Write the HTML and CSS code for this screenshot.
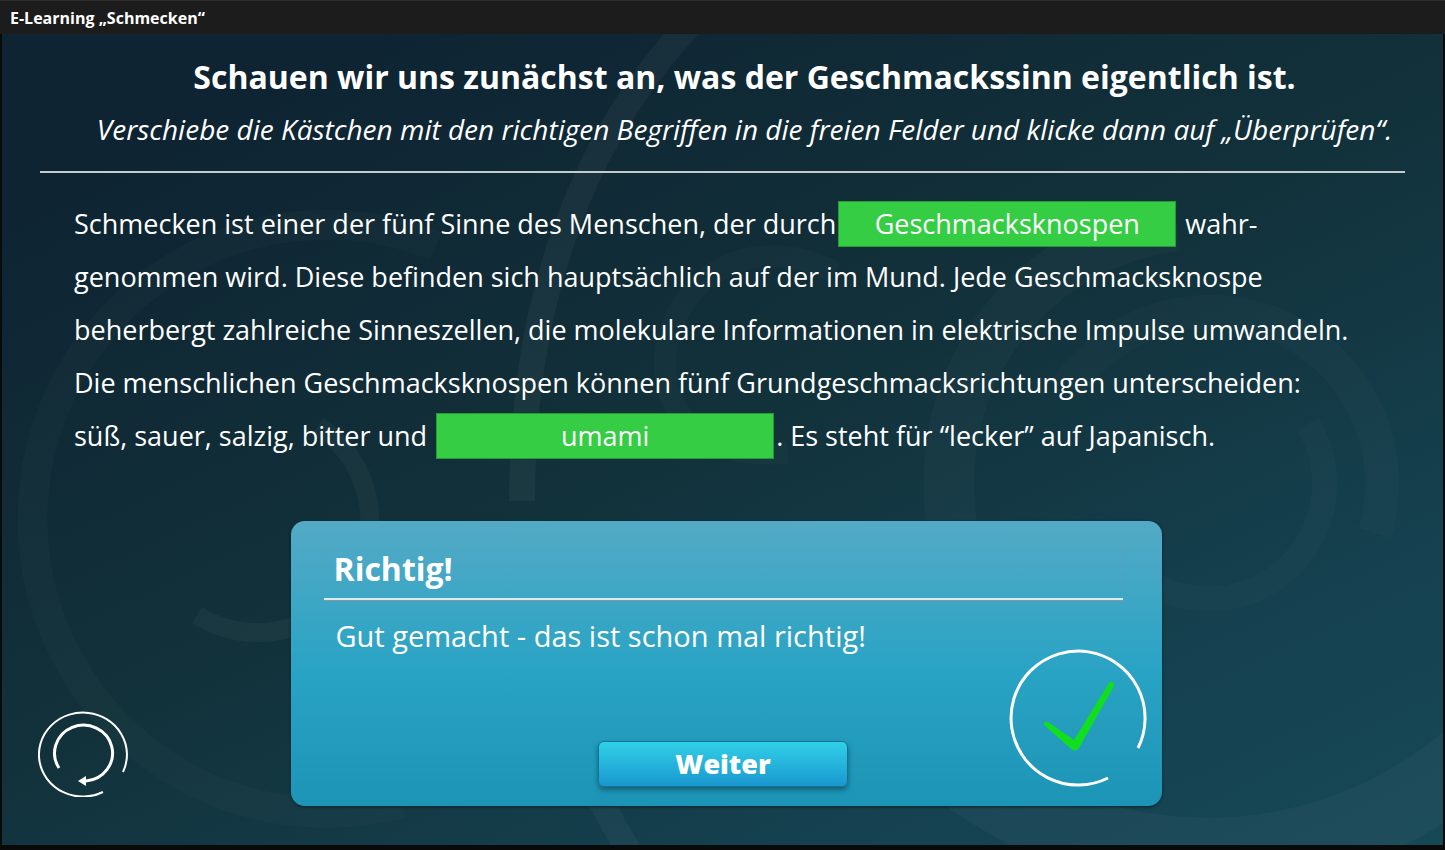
FILE: index.html
```html
<!DOCTYPE html>
<html lang="de">
  <head>
    <meta charset="utf-8">
    <title>E-Learning „Schmecken“</title>
    <link rel="stylesheet" href="styles.css">
  </head>
  <body>
    <div id="titlebar">E-Learning „Schmecken“</div>
    <main id="stage">
      <svg id="swirls" viewBox="0 0 1441 811" preserveAspectRatio="xMidYMid slice" aria-hidden="true">
        <g transform="translate(-2 -34)" fill="none" stroke="#fff">
          <path stroke-width="30" stroke-opacity=".018" d="M436 246A294 294 0 1 0 402 803" />
          <path stroke-width="19" stroke-opacity=".035" d="M318 426A112 112 0 0 1 197 615" />
          <path stroke-width="26" stroke-opacity=".04" d="M522 501C522 330 565 160 688 26" />
          <path stroke-width="25" stroke-opacity=".035" d="M585 770Q605 812 632 856" />
          <path stroke-width="22" stroke-opacity=".02" d="M835 272C740 225 665 290 665 365C665 420 710 460 788 453" />
          <path stroke-width="51" stroke-opacity=".025" d="M1177 226A256 256 0 0 0 949 480Q949 560 975 610" />
          <path stroke-width="74" stroke-opacity=".03" d="M890 700A403 403 0 0 0 1500 729" />
          <path stroke-width="34" stroke-opacity=".02" d="M1068 387A172 172 0 0 1 1375 533" />
          <path stroke-width="25" stroke-opacity=".018" d="M1308 424A115 115 0 1 1 1110 543" />
        </g>
      </svg>

      <header>
        <h1>Schauen wir uns zunächst an, was der Geschmackssinn eigentlich ist.</h1>
        <p>Verschiebe die Kästchen mit den richtigen Begriffen in die freien Felder und klicke dann auf „Überprüfen“.</p>
      </header>

      <p id="cloze">
        Schmecken ist einer der fünf Sinne des Menschen, der durch<button class="term" type="button" draggable="true">Geschmacksknospen</button>
        wahr-<br>
        genommen wird. Diese befinden sich hauptsächlich auf der im Mund. Jede Geschmacksknospe<br>
        beherbergt zahlreiche Sinneszellen, die molekulare Informationen in elektrische Impulse umwandeln.<br>
        Die menschlichen Geschmacksknospen können fünf Grundgeschmacksrichtungen unterscheiden:<br>
        süß, sauer, salzig, bitter und
        <button class="term" type="button" draggable="true">umami</button>. Es steht für “lecker” auf Japanisch.
      </p>

      <div id="bottom">
        <button id="reset" type="button" aria-label="Zurücksetzen">
          <svg width="92" height="88" viewBox="0 0 92 88" fill="none" stroke="#fff">
            <path stroke-width="2" d="M85 63A44 42 0 1 0 65 83" />
            <path stroke-width="3" d="M21 59A29 28 0 1 1 48 72" />
            <path fill="#fff" stroke="none" d="M40 72L48 67V77Z" />
          </svg>
        </button>
        <section id="feedback">
          <h2>Richtig!</h2>
          <p>Gut gemacht - das ist schon mal richtig!</p>
          <button id="next" type="button">Weiter</button>
          <svg id="check" width="138" height="138" viewBox="0 0 138 138" aria-hidden="true">
            <path fill="none" stroke="#fff" stroke-width="3" d="M129 99A67 67 0 1 0 99 129" />
            <path fill="#12de20" d="M39 73L65 91L100 34Q103 31 105 34L105 37L70 99Q66 104 61 99L35 76Q34 72 39 73Z" />
          </svg>
        </section>
      </div>
    </main>
  </body>
</html>
```
FILE: styles.css
```css
* { box-sizing: border-box; padding: 0; margin: 0; }

body {
  min-height: 100vh;
  display: flex;
  flex-direction: column;
  background: #0a0a0a;
  color: white;
  font-family: "Open Sans", "Noto Sans", sans-serif;
}

button {
  border: 0;
  background: none;
  color: inherit;
  font: inherit;
  cursor: pointer;
}

#titlebar {
  height: 34px;
  padding: 0 10px;
  border-top: 1px solid #2d2d2d;
  background: #1c1c1c;
  font-size: 16px;
  font-weight: bold;
  line-height: 34px;
}

#stage {
  position: relative;
  flex: 1;
  display: flex;
  flex-direction: column;
  margin: 0 2px 5px;
  overflow: hidden;
  background: linear-gradient(155deg, #0e2432 12%, #12323b 50%, #154150 80%, #174856 100%);
}

/* faint arcs behind everything */
#swirls {
  position: absolute;
  width: 100%;
  height: 100%;
}

header, #cloze, #bottom { position: relative; }

header {
  margin: 0 38px;
  padding: 19px 0 14px 44px;
  border-bottom: 2px solid #c4cbce;
  text-align: center;
  white-space: nowrap;
}

header h1 {
  font-size: 32px;
  line-height: 48px;
}

header p {
  margin: 0 -20px;
  font-size: 28px;
  font-style: italic;
  line-height: 56px;
}

#cloze {
  padding: 24px 72px 0;
  font-size: 27px;
  line-height: 53px;
}

.term {
  width: 338px;
  height: 46px;
  margin: 0 2px;
  border: 1px solid #279a36;
  background: #34cd43;
  line-height: 44px;
}

#bottom {
  display: grid;
  grid-template-columns: 1fr minmax(0, 871px) 1fr;
  align-items: end;
  margin: auto 0 39px;
  padding: 0 29px 0 36px;
}

#reset {
  width: 92px;
  height: 88px;
  margin-bottom: 9px;
}

#reset svg, #check { display: block; }

#feedback {
  position: relative;
  min-height: 285px;
  padding: 24px 39px 19px 33px;
  border-radius: 14px;
  background: linear-gradient(#53aac6, #29a3c4 53%, #1c94b5);
  box-shadow: 0 1px 3px #08202a;
}

#feedback h2 {
  padding: 0 10px 5px;
  border-bottom: 2px solid #dcebf0;
  box-shadow: 0 1px 1px #7a9aa5;
  font-size: 32px;
  line-height: 48px;
}

#feedback p {
  padding: 12px 12px 0;
  font-size: 29px;
  line-height: 48px;
}

#next {
  display: block;
  width: 250px;
  height: 46px;
  margin: 81px auto 0;
  border: 1px solid #15748f;
  border-radius: 6px;
  background: linear-gradient(#31d0e8, #1998cf);
  box-shadow: 0 3px 5px #126078;
  font-size: 27px;
  font-weight: 800;
  line-height: 44px;
}

#check {
  position: absolute;
  right: 15px;
  bottom: 19px;
}
```
